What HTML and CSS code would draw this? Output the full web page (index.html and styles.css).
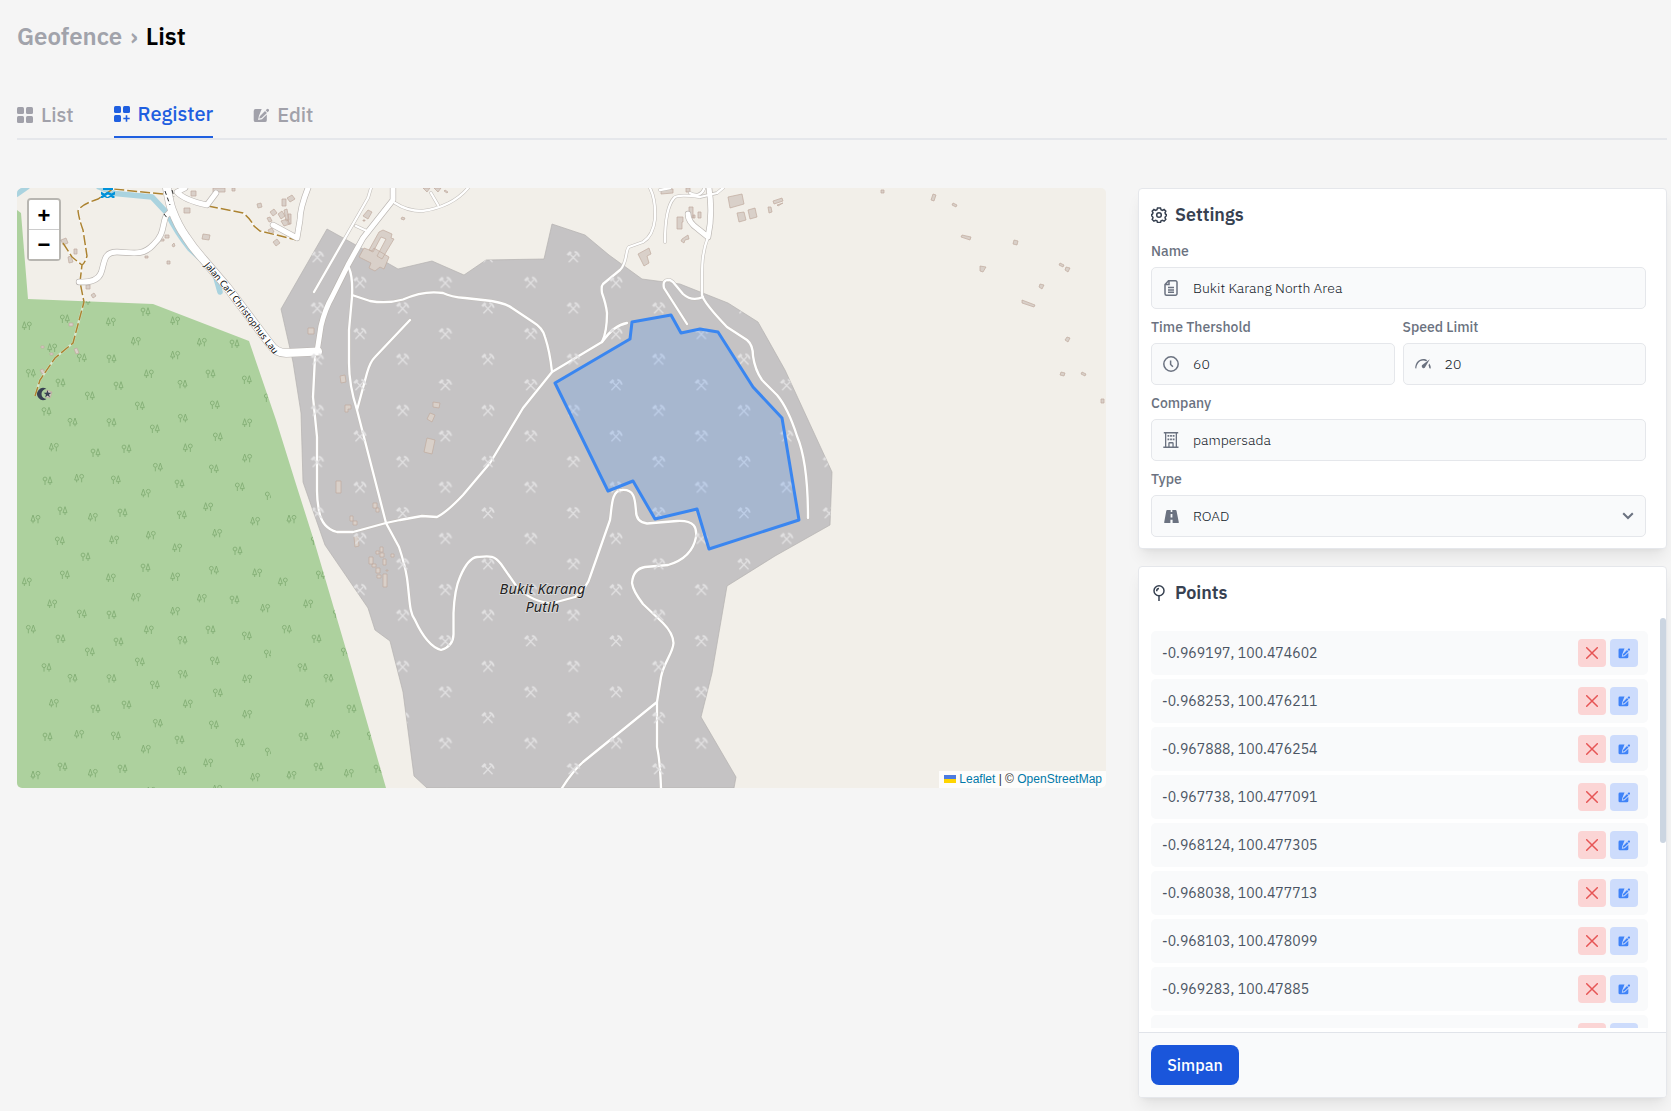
FILE: index.html
```html
<!DOCTYPE html>
<html lang="id">
<head>
<meta charset="utf-8">
<title>Geofence</title>
<link rel="stylesheet" href="styles.css">
</head>
<body>
<svg class="sprite" aria-hidden="true">
  <symbol id="i-edit" viewBox="0 0 16 16"><path d="M8.700 2H2.600A1.900 1.900 0 0 0 .7 3.900v9.300a1.900 1.900 0 0 0 1.900 1.900h9.300a1.900 1.900 0 0 0 1.900-1.900V7.600L9 12.300l-3.900.8.8-4.200z"/><path d="M6.800 9.300l5.200-5.300 1.900 1.900-5.300 5.200-2.300.5zM12.700 3.300l1-1a1.300 1.300 0 0 1 1.900 1.900l-1 1z"/></symbol>
  <symbol id="i-x" viewBox="0 0 12 12"><path d="M.7.7l10.600 10.600M11.300.7L.7 11.300" fill="none" stroke="currentColor" stroke-width="1.500" stroke-linecap="round"/></symbol>
</svg>
<main class="page">
  <h1 class="crumbs"><span>Geofence</span><span class="sep">›</span><span class="here">List</span></h1>
  <nav class="tabs">
    <a class="tab"><svg class="i16" viewBox="0 0 16 16"><rect width="7" height="7" rx="1.500"/><rect x="9" width="7" height="7" rx="1.500"/><rect y="9" width="7" height="7" rx="1.500"/><rect x="9" y="9" width="7" height="7" rx="1.500"/></svg><span>List</span></a>
    <a class="tab active"><svg class="i16" viewBox="0 0 16 16"><rect width="7" height="7" rx="1.500"/><rect x="9" width="7" height="7" rx="1.500"/><rect y="9" width="7" height="7" rx="1.500"/><path d="M11.700 9.300h1.600v2.400h2.400v1.600h-2.400v2.400h-1.600v-2.400H9.300v-1.600h2.400z"/></svg><span>Register</span></a>
    <a class="tab"><svg class="i16"><use href="#i-edit"/></svg><span>Edit</span></a>
  </nav>
  <div class="content">
    <section class="map">
      <svg class="tiles" viewBox="17 188 1089 600">
        <defs>
          <g id="ta"><circle cx="-8" cy="-5" r="5.800"/><path d="M-8 1V13M7-12L1 6H13ZM7 6V13"/></g>
          <g id="tb"><circle cx="8" cy="-5" r="5.800"/><path d="M8 1V13M-7-12L-13 6H-1ZM-7 6V13"/></g>
          <g id="pick"><path d="M-4.500 5.200L3.300-3.100M4.600 5.200L-3-2.600"/><path d="M1.400-5.300Q5-4.200 5.900-.4M-6-2.200L-2.800-5.300M-5-1.800L-2-4.600" stroke-width="1.700"/></g>
          <pattern id="wood" patternUnits="userSpaceOnUse" x="45" y="-6" width="768" height="768" patternTransform="translate(0 420) scale(.33333)">
            <g class="trees">
              <use href="#ta" x="173" y="12"/><use href="#ta" x="290" y="13"/><use href="#ta" x="504" y="0"/><use href="#ta" x="504" y="768"/><use href="#tb" x="696" y="14"/><use href="#ta" x="420" y="32"/><use href="#ta" x="609" y="56"/><use href="#ta" x="786" y="45"/><use href="#tb" x="116" y="87"/><use href="#ta" x="242" y="104"/><use href="#ta" x="335" y="92"/><use href="#tb" x="518" y="89"/><use href="#tb" x="696" y="120"/><use href="#ta" x="788" y="131"/><use href="#ta" x="429" y="147"/><use href="#ta" x="597" y="152"/><use href="#ta" x="98" y="188"/><use href="#tb" x="192" y="180"/><use href="#ta" x="303" y="185"/><use href="#ta" x="494" y="197"/><use href="#ta" x="675" y="206"/><use href="#tb" x="392" y="225"/><use href="#ta" x="765" y="233"/><use href="#ta" x="143" y="278"/><use href="#tb" x="579" y="266"/><use href="#ta" x="323" y="284"/><use href="#tb" x="233" y="297"/><use href="#ta" x="501" y="290"/><use href="#tb" x="61" y="303"/><use href="#tb" x="720" y="309"/><use href="#ta" x="135" y="368"/><use href="#tb" x="606" y="345"/><use href="#tb" x="407" y="351"/><use href="#tb" x="297" y="365"/><use href="#tb" x="486" y="389"/><use href="#ta" x="668" y="398"/><use href="#ta" x="791" y="386"/><use href="#ta" x="212" y="416"/><use href="#ta" x="392" y="449"/><use href="#ta" x="597" y="456"/><use href="#ta" x="150" y="470"/><use href="#tb" x="287" y="479"/><use href="#tb" x="480" y="476"/><use href="#tb" x="726" y="464"/><use href="#tb" x="803" y="491"/><use href="#tb" x="35" y="491"/><use href="#tb" x="362" y="537"/><use href="#tb" x="560" y="540"/><use href="#ta" x="659" y="545"/><use href="#tb" x="111" y="557"/><use href="#tb" x="750" y="570"/><use href="#ta" x="201" y="587"/><use href="#ta" x="290" y="590"/><use href="#tb" x="480" y="579"/><use href="#ta" x="48" y="633"/><use href="#ta" x="816" y="633"/><use href="#ta" x="587" y="635"/><use href="#tb" x="401" y="635"/><use href="#ta" x="137" y="662"/><use href="#ta" x="311" y="671"/><use href="#ta" x="503" y="666"/><use href="#ta" x="696" y="653"/><use href="#ta" x="225" y="701"/><use href="#ta" x="375" y="731"/><use href="#ta" x="600" y="728"/><use href="#ta" x="762" y="707"/><use href="#ta" x="95" y="748"/>
            </g>
          </pattern>
          <pattern id="quarry" patternUnits="userSpaceOnUse" x="295.600" y="244.200" width="85.330" height="51.200">
            <g class="picks"><use href="#pick" x="21.700" y="12.800"/><use href="#pick" x="64.400" y="38.400"/></g>
          </pattern>
          <path id="wood-area" d="M17 210L21 213 28 299 153 304 249 341 276 420 295 481 315 544 350 663 386 788H17Z"/>
          <path id="quarry-area" d="M327 229L363 249 398 269 432 261 464 275 486 260 544 259 552 224 585 235 609 255 642 279 680 284 728 303 758 322 785 370 832 472 830 525 775 556 727 586 712 673 701 717 736 777 734 788H427L414 776 403 692 390 641 375 630 368 608 325 545 303 482 301 413 293 362 281 309Z"/>
          <path id="road-name" d="M204 265.500L229 295 274 355"/>
          <g id="wide">
            <path d="M167 188C169 200 170 205 172 210Q178 226 186 237 193 248 203 259L227 287 270 344Q276 353 286 353L318 351.500"/>
          </g>
          <g id="mid">
            <path d="M317 352L321 326Q325 309 332 297L348 265 363 238 393 200V188M709 188Q713 214 708 237L698 229Q688 222 688 214"/>
            <path d="M79 282Q97 283 101 273C105 262 103 252 117 252 130 252 142 257 153 245 165 234 162 225 166 216L171 211M308 188Q300 208 300 220L297 238 273 225M185 188L177 192Q184 200 207 205L216 193"/>
          </g>
          <g id="thin">
            <path d="M349 268Q353 277 352 297L349 330V363Q349 385 357 410L375 480 386 523 399 547Q405 565 407 578C410 600 409 612 415 620Q427 646 441 650 454 646 453.500 633L453.500 613C454 602 455 588 460 577Q468 558 477 557C490 556 494 555 501 564L517 587Q533 603 553 603L575 597Q588 586 590 577L610 520C612 508 611 490 622 490 635 489 635 500 636 511Q636 522 647 523.500L677 521C695 520 697 528 696 537Q692 558 668 565L645 567Q633 569 632 583 633 591 643 604L663 623Q673 633 673.500 643C673 653 664 662 661 677L657 702V747Q660 760 661 788M657 702L583 762Q573 771 562 788"/>
            <path d="M352 295L370 301Q387 304 403 299.500 424 290 443 293 451 297 465 298L483 300Q504 302 512 308L533 322Q543 328 545 337 550 352 552 372"/>
            <path d="M410 320L375 357Q370 362 367 373L357 410M627 323Q614 325 602 342L552 372 523 408 490 463 463 495Q447 512 437 517L422 516 400 520 386 523 353 532H337Q322 528 319 511 317 500 317 491V437L313 397 315 357"/>
            <path d="M602 342Q607 332 607 313 606 304 602 293 601 286 603 284L620 270C628 262 625 250 629 247L643 242Q653 236 655 219 656 200 650 188M687 324L664 288Q662 279 670 280L673 282 683 294Q692 302 703 297"/>
            <path d="M708 237C701 255 702 270 702 295Q704 303 727 327L747 340Q753 345 753 356 755 370 762 380L777 395Q788 408 797 436 808 462 808 518M665 242Q665 208 674 198 677 194 700 197L717 193 723 188M314 292L368 198 371 188M356 226L369 232M395 203Q407 211 422 211 452 207 468 188M431 193L438 205M660 190L670 188M690 193Q700 198 704 189"/>
          </g>
        </defs>
        <rect x="17" y="188" width="1089" height="600" fill="#f2efe9"/>
        <use href="#wood-area" fill="#add19e"/><use href="#wood-area" fill="url(#wood)"/>
        <use href="#quarry-area" fill="#c5c3c4" stroke="#b4b2b0" stroke-width=".7"/>
        <g class="water"><path d="M99 187L115 193.500 152 197 167 213Q177 233 190 249L214 271 220 292"/><path d="M17 194L27 187"/></g>
        <g class="buildings">
          <path d="M61 240l5-2 2 5-5 2zM74 249h3v5h-3zM68 257l3-1 2 6-4 1zM86 285h4v4h-4zM91 295l3-2 2 3-3 2zM184 208h6v5h-6zM191 191h5v5h-5zM213 188h12v4h-12zM232 188h3v3h-3zM257 204l4-1 1 4-4 1zM282 199h4v7h-4zM287 198l5-3 3 4-5 3zM270 212l4-3 3 4-4 3zM278 214l4-3 3 5-4 3zM284 210l3-1 2 11-3 1zM288 214h3v10h-3zM267 218l3-1 2 4-3 1zM281 221l6-2 3 5-6 2zM268 230l4-2 2 4-4 2zM273 242l4-3 3 4-4 3zM203 234l7 1-1 5-7-1zM165 235h4v3h-4zM160 239h4v2h-4zM172 245l2-2 1 3-2 1zM145 256h3v2h-3zM167 261h3v3h-3zM69 323h4v3h-4zM74 349l3-1 2 5-3 1zM40 370l3-1 2 4-3 1zM41 346h3v2h-3zM50 353h3v2h-3zM47 390l5 2-2 6-4-1z"/>
          <path d="M363 216l5-6 4 2-4 7zM363 220h2v1h-2zM402 217l3 1-1 2-3-1zM423 188l4 4 3-4zM434 188l4 4 3-4zM445 190l3 2-1 1-3-2zM383 230l9 4-1 4 3 1-12 20-5-3 9-17-5-2-8 15-4-2 10-18zM364 248l8 3 2-3 15 9-5 12-4-2-5 4-6-3 2-5-12-6zM308 328h6v6h-6zM340 376l5-1 1 7-5 1zM345 405h6v4h-3v3h-3zM433 402l7 1-1 5-6-1zM430 413l5 2-3 7-5-3zM427 438l8 2-3 14-8-2z"/>
          <path d="M336 481h5v12h-5zM373 503h4v5h-4zM376 508h3v4h-3zM350 516h3v5h-3zM353 521h4v4h-4zM354 537l4-1 1 10-4 1zM369 557h4v7h-4zM376 551h3v3h-3zM380 547h3v5h-3zM380 553h4v4h-4zM383 559h3v6h-3zM391 554h3v3h-3zM372 564h4v3h-4zM376 568h4v5h-4zM377 575h4v3h-4zM383 574h4v13h-4zM386 570h2v1h-2z"/>
          <path d="M728 197l14-3 2 10-14 4zM737 213l7-1 2 8-7 2zM748 210l7-2 2 9-7 2zM768 207l3 0 1 5-3 1zM773 201l9-3 1 3-9 3zM777 205l6-2-5 3zM661 190l12-1v4l-12 1zM686 188h4v4h-4zM689 207h4v11h-4zM698 212h3v6h-3zM677 217h6v5h-1v7h-5zM693 215h2v3h-2zM682 239l6-4 1 4-4 1-1 3-3-2zM638 254l11-6 2 6-4 2 2 7-5 3-3-6z"/>
          <path d="M881 190h3v3h-3zM933 194l3 1-2 6-3-1zM953 203l4 2-1 2-4-2zM962 235l9 2-1 3-9-3zM1014 240l4 1-1 4-4-1zM980 266l6 1-3 5-3-1zM1060 263l4 2-1 2-4-2zM1066 267l4 1-2 4-3-2zM1040 284l4 1-2 4-3-2zM1022 300l13 5-1 2-12-4zM1067 337l3 1-2 4-3-2zM1061 372l4 1-1 3-4-1zM1082 372l4 2-1 2-4-2zM1101 399h3v4h-3z"/>
        </g>
        <path class="track under" d="M163 194L113 189 98 199Q80 205 78 211 79 219 83 230L87 256Q85 263 82 265L80 282 84 302 73 343 55 358 40 380 35 396M63 243L72 257 82 265M208 206L243 213Q250 218 254 226L260 231 297 240"/>
        <path class="track" d="M163 194L113 189 98 199Q80 205 78 211 79 219 83 230L87 256Q85 263 82 265L80 282 84 302 73 343 55 358 40 380 35 396M63 243L72 257 82 265M208 206L243 213Q250 218 254 226L260 231 297 240"/>
        <g class="road case"><use href="#thin" stroke-width="3.400" stroke="#c3bfbb"/><use href="#mid" stroke-width="6.300"/><use href="#wide" stroke-width="9.200"/></g>
        <g class="road"><use href="#thin" stroke-width="2.300"/><use href="#mid" stroke-width="5"/><use href="#wide" stroke-width="8"/></g>
        <use href="#quarry-area" fill="url(#quarry)"/>
        <path d="M164 214l4 5M165 191l5 14M172 190l2 7" fill="none" stroke="#333" stroke-dasharray="4 3"/>
        <path d="M103 188h10v2h-10zM101 191.500l3.500 2 3.500-2 3.500 2 3.500-2v3l-3.500 2-3.500-2-3.500 2-3.500-2zM101 196l3-1 3.500 2 3.500-2 3.500 1v2h-2l-1.500-1-2.500 1h-2l-2-1-2 1h-2z" fill="#0092da"/>
        <path d="M46.500 389a6 6 0 1 0 0 10 5 5 0 1 1 0-10z"/><path d="M47.500 390l1 2.800h3l-2.400 1.700.9 2.900-2.500-1.800-2.400 1.800.9-2.900-2.400-1.700h3z"/>
        <text class="road-label"><textPath href="#road-name">Jalan Carl Christophus Lau</textPath></text>
        <g class="place"><text x="542.500" y="593.700" textLength="86">Bukit Karang</text><text x="542.500" y="611.500" textLength="34">Putih</text></g>
        <path class="fence" d="M555 383L630 339 632 322 671 315 681 333 700 329 718 332 753 387 782 418 799 520 709 549 697 509 655 519 633 481 608 491Z"/>
      </svg>
      <div class="zoom"><a>+</a><a>−</a></div>
      <div class="credit"><svg class="flag" viewBox="0 0 12 8"><path fill="#4c7be1" d="M0 0h12v4H0z"/><path fill="#ffd500" d="M0 4h12v4H0z"/></svg> <a>Leaflet</a> | © <a>OpenStreetMap</a></div>
    </section>
    <aside class="side">
      <section class="card settings">
        <h2><svg class="i16 line" viewBox="0 0 16 16"><path d="M6.500.9h3l.5 1.800 1.400.6 1.700-.9 1.700 1.800-.8 1.600.5 1.300 1 .5v1.200l-1 .6-.5 1.400.8 1.600-1.700 1.800-1.700-.8-1.400.5-.5 1.500h-3l-.5-1.500-1.400-.5-1.700.8-1.700-1.800.8-1.600-.6-1.400-.9-.6V7.600l.9-.5L2 5.800l-.8-1.600 1.700-1.800 1.700.9L6 2.700z"/><circle cx="8" cy="8" r="2.300"/></svg><span>Settings</span></h2>
        <div class="field first"><label>Name</label><div class="input"><svg class="i16 line" viewBox="0 0 16 16"><path d="M5.500.8h7A1.500 1.500 0 0 1 14 2.300v11.400a1.500 1.500 0 0 1-1.500 1.500h-9A1.500 1.500 0 0 1 2 13.700V4.500zM6 1v3.500H2.200M5 7.500h6M5 10h6M5 12.300h6"/></svg><span>Bukit Karang North Area</span></div></div>
        <div class="pair">
          <div class="field"><label>Time Thershold</label><div class="input"><svg class="i16 line" viewBox="0 0 16 16"><circle cx="8" cy="8" r="7.200"/><path d="M7.600 4.500v4l2.300 2.200"/></svg><span>60</span></div></div>
          <div class="field"><label>Speed Limit</label><div class="input"><svg class="i16" viewBox="0 0 16 16"><path d="M.2 12.300C.3 6.500 3.900 3 8.200 3c1.700 0 3 .5 4.100 1.200l-1.200 1A7 7 0 0 0 8 4.600C4.500 4.600 1.700 8 1.300 12.400zM14.800 3.300l-5 8.500a2 2 0 0 1-2.900-2.500zM14.300 7.400q1.500 2 1.500 5l-1.500-.2q-.2-2-.8-3z"/></svg><span>20</span></div></div>
        </div>
        <div class="field"><label>Company</label><div class="input"><svg class="i16" viewBox="0 0 16 16"><path fill-rule="evenodd" d="M.8 0h14.400v1.500H14v13h1.500V16H.3v-1.500H2v-13H.8zM3.300 1.500v13h2V11.300A1.300 1.300 0 0 1 6.600 10h2.800a1.300 1.300 0 0 1 1.300 1.300v3.200h2v-13zM6.600 14.500h2.800v-3H6.600zM4.500 3h1.800v1.800H4.500zm2.600 0h1.800v1.800H7.100zm2.600 0h1.800v1.800H9.700zM4.500 6.500h1.800v1.800H4.500zm2.600 0h1.800v1.800H7.100zm2.600 0h1.800v1.800H9.700z"/></svg><span>pampersada</span></div></div>
        <div class="field"><label>Type</label><div class="input"><svg class="i16 road-icon" viewBox="0 0 16 16"><path fill-rule="evenodd" d="M4.200 2h3.500v2h1.600V2h3.300a1 1 0 0 1 .9.700l2.300 11.500a.8.8 0 0 1-.8.900H9.600v-3.300H7.400v3.300H2a.8.8 0 0 1-.8-.9L3.300 2.700a1 1 0 0 1 .9-.7zM7.600 6v3.500h1.800V6z"/></svg><span>ROAD</span><svg class="chev" viewBox="0 0 12 8"><path d="M1.200 1.200L6 6l4.800-4.800"/></svg></div></div>
      </section>
      <section class="card points">
        <h2><svg class="i16 line" viewBox="0 0 16 16"><circle cx="8" cy="5.800" r="5"/><path d="M8 10.800V16M5.700 6.200Q5.600 3.900 8 3.600"/></svg><span>Points</span></h2>
        <div class="scroller">
          <ul>
            <li><span>-0.969197, 100.474602</span><button class="del"><svg><use href="#i-x"/></svg></button><button class="mod"><svg><use href="#i-edit"/></svg></button></li>
            <li><span>-0.968253, 100.476211</span><button class="del"><svg><use href="#i-x"/></svg></button><button class="mod"><svg><use href="#i-edit"/></svg></button></li>
            <li><span>-0.967888, 100.476254</span><button class="del"><svg><use href="#i-x"/></svg></button><button class="mod"><svg><use href="#i-edit"/></svg></button></li>
            <li><span>-0.967738, 100.477091</span><button class="del"><svg><use href="#i-x"/></svg></button><button class="mod"><svg><use href="#i-edit"/></svg></button></li>
            <li><span>-0.968124, 100.477305</span><button class="del"><svg><use href="#i-x"/></svg></button><button class="mod"><svg><use href="#i-edit"/></svg></button></li>
            <li><span>-0.968038, 100.477713</span><button class="del"><svg><use href="#i-x"/></svg></button><button class="mod"><svg><use href="#i-edit"/></svg></button></li>
            <li><span>-0.968103, 100.478099</span><button class="del"><svg><use href="#i-x"/></svg></button><button class="mod"><svg><use href="#i-edit"/></svg></button></li>
            <li><span>-0.969283, 100.47885</span><button class="del"><svg><use href="#i-x"/></svg></button><button class="mod"><svg><use href="#i-edit"/></svg></button></li>
            <li><span></span><button class="del"></button><button class="mod"></button></li>
          </ul>
          <div class="bar"></div>
        </div>
        <footer><button class="save">Simpan</button></footer>
      </section>
    </aside>
  </div>
</main>
</body>
</html>
```
FILE: styles.css
```css
* { box-sizing: border-box; }
body { margin: 0; background: #f5f5f5; font-family: "IBM Plex Sans", Roboto, sans-serif; color: #374151; height: 1111px; overflow: hidden; }
svg { display: block; fill: currentColor; }
.sprite { display: none; }
.page { padding: 16px 4px 0 17px; }
h1, h2, ul { margin: 0; padding: 0; }

.crumbs { display: flex; height: 40px; align-items: center; font-size: 24px; font-weight: 600; color: #a1a3ab; }
.sep { margin: 0 8px; }
.here { color: #000; }

.tabs { display: flex; gap: 40px; height: 45px; margin-top: 39px; border-bottom: 2px solid #e5e7eb; font-size: 20px; font-weight: 500; color: #a1a1aa; }
.tab { display: flex; height: 43px; gap: 8px; align-items: center; padding-bottom: 3px; }
.tab span { margin-top: -1px; }
.tab.active { color: #1f5fe0; border-bottom: 2px solid #1f5fe0; }
.i16 { width: 16px; height: 16px; flex: none; }
.line { fill: none; stroke: currentColor; stroke-width: 1.5; }

.content { display: grid; grid-template-columns: 1089px 529px; justify-content: space-between; margin-top: 48px; align-items: start; }
.map { position: relative; height: 600px; border-radius: 5px; overflow: hidden; }
.tiles { width: 1089px; height: 600px; }
.trees { fill: none; stroke: #83ae75; stroke-width: 2.8; }
.picks { fill: none; stroke: #e2e1e2; stroke-width: 1.3; }
.water { fill: none; stroke: #aad3df; stroke-width: 5.5; stroke-linecap: round; stroke-linejoin: round; }
.buildings { fill: #d9d0c9; stroke: #c0aa9d; stroke-width: .7; }
.track { fill: none; stroke: #ac8331; stroke-width: 1.5; stroke-dasharray: 10 3; }
.under { stroke: #fff; stroke-opacity: .5; stroke-width: 2.2; stroke-dasharray: none; }
.road { fill: none; stroke: #fff; stroke-linecap: round; stroke-linejoin: round; }
.case { stroke: #bbb6b2; }
.road-label { font: 9.2px "Noto Sans", sans-serif; fill: #111; stroke: #fff; stroke-width: 1px; paint-order: stroke; }
.place { font: italic 14.5px "Noto Sans", sans-serif; text-anchor: middle; fill: #222; stroke: #ddd; stroke-width: 1.5px; paint-order: stroke; }
.fence { fill: #3388ff; fill-opacity: .2; stroke: #3a86f0; stroke-width: 3; stroke-linejoin: round; }
.zoom { position: absolute; left: 10px; top: 10px; border: 2px solid rgba(0,0,0,.24); border-radius: 4px; background-clip: padding-box; }
.zoom a { display: block; width: 30px; height: 29px; background: #fff; color: #000; font: bold 22px/29px "Liberation Sans", sans-serif; text-align: center; }
.zoom a:first-child { height: 30px; line-height: 31px; border-bottom: 1px solid #ccc; border-radius: 2px 2px 0 0; }
.credit { position: absolute; right: 0; bottom: 0; padding: 0 4px 0 5px; background: rgba(255,255,255,.8); color: #333; font: 12px/17px "Liberation Sans", sans-serif; white-space: nowrap; }
.credit a { color: #0078a8; }
.flag { display: inline-block; width: 12px; height: 8px; }

.side { display: grid; gap: 17px; }
.card { border: 1px solid #e5e7eb; border-radius: 4px; background: #fff; box-shadow: 0 10px 15px -3px rgba(0,0,0,.08), 0 4px 6px -4px rgba(0,0,0,.06); }
.card h2 { display: flex; gap: 8px; height: 28px; align-items: center; font-size: 18px; font-weight: 600; color: #374151; }
.card h2 span { margin-top: -2px; }
.settings { height: 361px; padding: 12px 20px 0 12px; }
.field { padding-top: 8px; }
.field.first { padding-top: 12px; }
.field label { display: block; height: 20px; margin-bottom: 6px; font-size: 14px; line-height: 20px; font-weight: 500; color: #6b7280; }
.input { display: flex; align-items: center; height: 42px; padding: 0 11px; gap: 14px; background: #f9fafb; border: 1px solid #e5e7eb; border-radius: 5px; color: #6b7280; font-size: 14px; }
.input span { color: #111827; font-weight: 300; }
.pair { display: grid; grid-template-columns: 1fr 1fr; gap: 8px; }
.chev { width: 12px; height: 8px; margin-left: auto; fill: none; stroke: currentColor; stroke-width: 2; }

.points { height: 532px; display: flex; flex-direction: column; overflow: hidden; }
.points h2 { margin: 12px 12px 11px; }
.scroller { display: flex; justify-content: space-between; flex: 1; min-height: 0; margin-bottom: 4px; overflow: hidden; }
ul { width: 497px; margin: 13px 0 0 12px; list-style: none; }
li { display: flex; align-items: center; gap: 4px; height: 44px; margin-bottom: 4px; padding: 0 10px 0 11px; border-radius: 5px; background: #f9fafb; color: #4b5563; font-size: 14px; letter-spacing: .04px; }
li span { flex: 1; }
li button { display: grid; place-items: center; width: 28px; height: 28px; padding: 0; border: 0; border-radius: 4px; }
.del { background: #fbd5d5; color: #e65555; }
.mod { background: #cddcfc; color: #3f83f8; }
li svg { width: 12px; height: 12px; }
.bar { width: 6px; height: 225px; border-radius: 3px; background: #cbd5e1; }
footer { height: 65px; padding: 12px; border-top: 1px solid #e1e4ea; background: #f9fafb; }
.save { width: 88px; height: 40px; padding: 0; border: 0; border-radius: 8px; background: #1a56db; color: #fff; font: 500 16px "IBM Plex Sans", Roboto, sans-serif; }
```
